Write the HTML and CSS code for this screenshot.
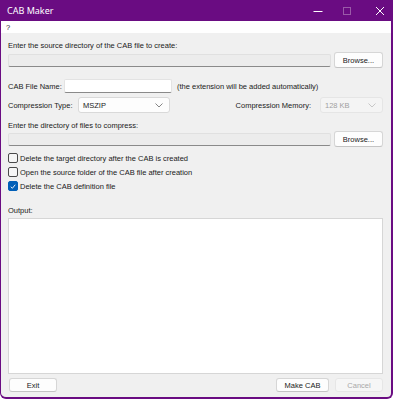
FILE: index.html
```html
<!DOCTYPE html>
<html>
<head>
<meta charset="utf-8">
<link rel="stylesheet" href="styles.css">
</head>
<body>
<div class="window">
  <div class="titlebar">
    <span class="title">CAB Maker</span>
    <div class="controls">
      <span class="ctl"><svg width="10" height="10" viewBox="0 0 10 10"><line x1="0.5" y1="5.5" x2="9.5" y2="5.5" stroke="#fff" stroke-width="1"/></svg></span>
      <span class="ctl"><svg width="10" height="10" viewBox="0 0 10 10"><rect x="1.5" y="1.5" width="7" height="7" fill="none" stroke="#9a5aa8" stroke-width="1"/></svg></span>
      <span class="ctl"><svg width="10" height="10" viewBox="0 0 10 10"><path d="M1 1 L9 9 M9 1 L1 9" stroke="#fff" stroke-width="1"/></svg></span>
    </div>
  </div>
  <div class="menubar"><span class="menu">?</span></div>
  <div class="client">
    <div class="label l1">Enter the source directory of the CAB file to create:</div>
    <div class="pathrow p1">
      <div class="pathbox"></div>
      <div class="btn browse">Browse...</div>
    </div>
    <div class="row r2">
      <span class="lbl lname">CAB File Name:</span>
      <div class="edit name"></div>
      <span class="hint">(the extension will be added automatically)</span>
    </div>
    <div class="row r3">
      <span class="lbl ltype">Compression Type:</span>
      <div class="combo ctype"><span>MSZIP</span><svg width="8" height="5" viewBox="0 0 8 5"><path d="M0.5 0.5 L4 4 L7.5 0.5" fill="none" stroke="#666" stroke-width="0.8"/></svg></div>
      <span class="spacer"></span>
      <span class="lbl">Compression Memory:</span>
      <div class="combo cmem disabled"><span>128 KB</span><svg width="8" height="5" viewBox="0 0 8 5"><path d="M0.5 0.5 L4 4 L7.5 0.5" fill="none" stroke="#bbb" stroke-width="0.8"/></svg></div>
    </div>
    <div class="label l2">Enter the directory of files to compress:</div>
    <div class="pathrow p2">
      <div class="pathbox"></div>
      <div class="btn browse">Browse...</div>
    </div>
    <div class="checks">
      <label class="chk"><span class="box"></span>Delete the target directory after the CAB is created</label>
      <label class="chk"><span class="box"></span>Open the source folder of the CAB file after creation</label>
      <label class="chk"><span class="box checked"><svg width="9" height="9" viewBox="0 0 9 9"><path d="M2 4.8 L3.8 6.5 L7 2.5" fill="none" stroke="#fff" stroke-width="1"/></svg></span>Delete the CAB definition file</label>
    </div>
    <div class="label l3">Output:</div>
    <div class="output"></div>
    <div class="bottom">
      <div class="btn exit">Exit</div>
      <span class="spacer"></span>
      <div class="btn make">Make CAB</div>
      <div class="btn cancel disabled">Cancel</div>
    </div>
  </div>
</div>
</body>
</html>
```
FILE: styles.css
```css
html, body {
  margin: 0;
  padding: 0;
  background: #ffffff;
}
body {
  font-family: "Liberation Sans", Arial, sans-serif;
  font-size: 7.5px;
  color: #1a1a1a;
}
.window {
  width: 393px;
  height: 399px;
  box-sizing: border-box;
  border-left: 1px solid #6a0c82;
  border-right: 2px solid #6a0c82;
  border-bottom: 2px solid #6a0c82;
  border-bottom-left-radius: 6px;
  border-bottom-right-radius: 6px;
  display: flex;
  flex-direction: column;
  overflow: hidden;
  background: #f0f0f0;
}
.titlebar {
  height: 21px;
  flex: none;
  background: #6a0c82;
  display: flex;
  align-items: center;
  padding-left: 6px;
  color: #fff;
}
.title {
  font-family: "Noto Sans", "Liberation Sans", sans-serif;
  font-size: 9px;
  flex: 1;
}
.controls {
  display: flex;
  padding-right: 1px;
}
.ctl {
  width: 20px;
  height: 21px;
  display: flex;
  align-items: center;
  justify-content: center;
}
.ctl + .ctl { margin-left: 9px; }
.ctl:last-child { margin-left: 13px; }
.menubar {
  height: 12px;
  flex: none;
  background: #fff;
  display: flex;
  align-items: center;
  padding-left: 5px;
}
.client {
  flex: 1;
  display: flex;
  flex-direction: column;
  padding: 0 8px 0 7px;
}
.label {
  height: 10px;
  line-height: 10px;
  white-space: nowrap;
  flex: none;
}
.l1 { margin-top: 8px; }
.pathrow {
  display: flex;
  align-items: center;
  height: 16px;
  gap: 3px;
  flex: none;
}
.p1 { margin-top: 1px; }
.p2 { margin-top: 0; }
.pathbox {
  flex: 1;
  height: 11px;
  background: #ececec;
  border: 1px solid #e0e0e0;
  border-bottom-color: #8a8a8a;
  border-radius: 2px;
}
.btn {
  box-sizing: border-box;
  height: 16px;
  display: flex;
  align-items: center;
  justify-content: center;
  background: #fdfdfd;
  border: 1px solid #d6d6d6;
  border-bottom-color: #c4c4c4;
  border-radius: 3px;
}
.browse { width: 49px; }
.row {
  display: flex;
  align-items: center;
  height: 16px;
  white-space: nowrap;
  flex: none;
}
.r2 { margin-top: 10px; }
.r3 { margin-top: 3px; }
.lname { width: 56px; }
.ltype { width: 70px; }
.edit {
  box-sizing: border-box;
  height: 14px;
  background: #fff;
  border: 1px solid #e3e3e3;
  border-bottom-color: #8a8a8a;
  border-radius: 2px;
}
.name { width: 108px; }
.hint { margin-left: 5px; }
.combo {
  box-sizing: border-box;
  height: 16px;
  background: #fdfdfd;
  border: 1px solid #d9d9d9;
  border-radius: 3px;
  display: flex;
  align-items: center;
  justify-content: space-between;
  padding: 0 6px 0 4px;
}
.ctype { width: 92px; }
.spacer { flex: 1; }
.cmem {
  width: 63px;
  margin-left: 9px;
  background: #f4f4f4;
  border-color: #e5e5e5;
  color: #a0a0a0;
}
.l2 { margin-top: 8px; }
.checks {
  display: flex;
  flex-direction: column;
  margin-top: 4px;
  flex: none;
}
.chk {
  display: flex;
  align-items: center;
  height: 14px;
  gap: 2px;
}
.box {
  box-sizing: border-box;
  width: 10px;
  height: 10px;
  border: 1px solid #4a4a4a;
  border-radius: 2px;
  background: #f6f6f6;
  display: flex;
  align-items: center;
  justify-content: center;
}
.box.checked {
  background: #005fb8;
  border-color: #005fb8;
}
.l3 { margin-top: 13px; }
.output {
  height: 156px;
  flex: none;
  margin-top: 2px;
  background: #fff;
  border: 1px solid #d6d6d6;
  box-sizing: border-box;
}
.bottom {
  display: flex;
  align-items: center;
  margin-top: 4px;
  height: 14px;
  gap: 6px;
  flex: none;
}
.bottom .btn { height: 14px; }
.exit { width: 48px; margin-left: 1px; }
.make { width: 53px; }
.cancel {
  width: 48px;
  background: #f6f6f6;
  border-color: #e6e6e6;
  color: #a8a8a8;
}
```
